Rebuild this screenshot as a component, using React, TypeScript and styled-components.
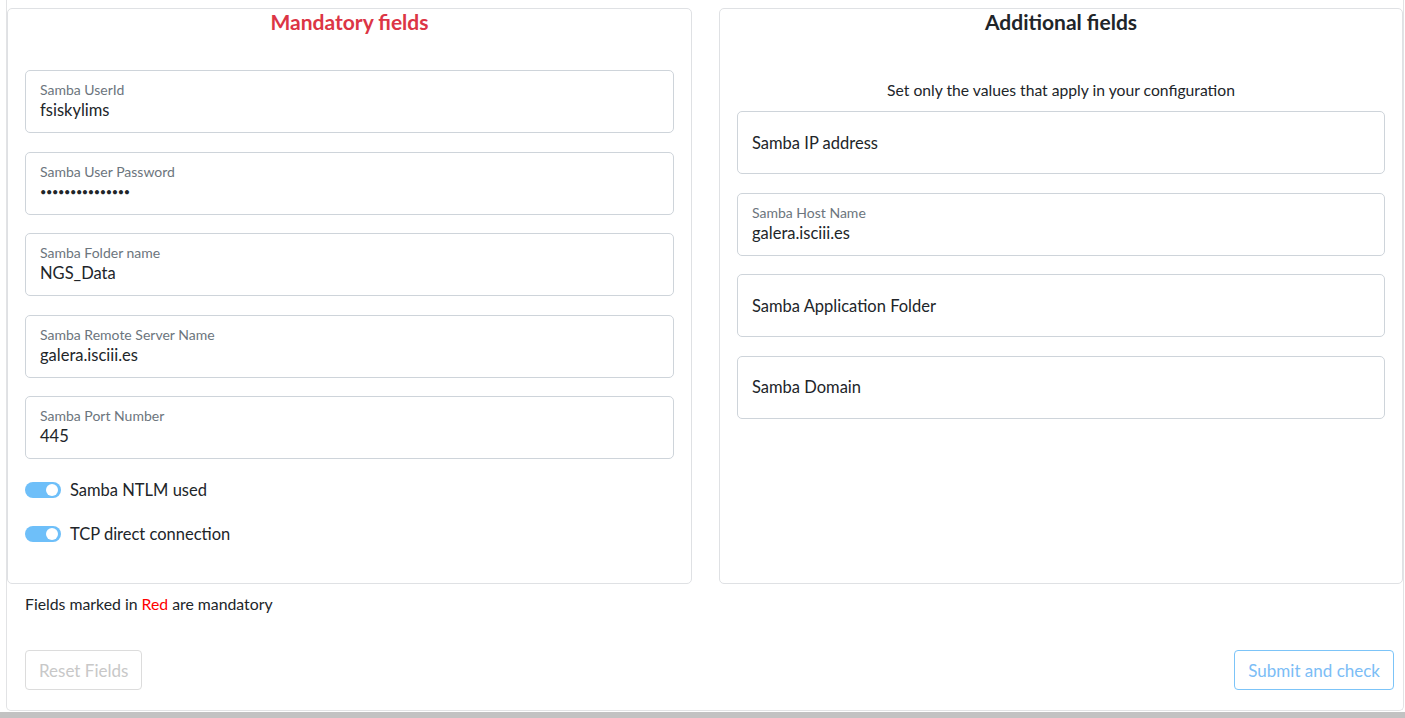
import React from 'react';
import styled, { createGlobalStyle } from 'styled-components';

const GlobalStyle = createGlobalStyle`
  html, body {
    margin: 0;
    padding: 0;
    background: #ffffff;
    font-family: Lato, "Noto Sans", sans-serif;
    color: #212529;
    overflow: hidden;
  }
  * { box-sizing: border-box; }
`;

const Page = styled.div({
  display: 'flex',
  flexDirection: 'column',
  height: 718,
});

const OuterCard = styled.div({
  border: '1px solid #e2e3e5',
  borderTop: 'none',
  borderRadius: '0 0 5px 5px',
  height: 711,
  marginLeft: 6,
  padding: '8px 9px 18px 0',
  width: 1398,
  display: 'flex',
  flexDirection: 'column',
});

const Columns = styled.div({
  display: 'grid',
  gridTemplateColumns: '685px 1fr',
  columnGap: 27,
  marginRight: -9,
});

const Panel = styled.div({
  border: '1px solid #dfe1e4',
  borderRadius: 5,
  height: 576,
  padding: '0 17px',
});

const PanelTitle = styled.h2<{ $red?: boolean }>`
  margin: 0;
  text-align: center;
  font-size: 21px;
  line-height: 26px;
  font-weight: 700;
  color: ${(p) => (p.$red ? '#dc3545' : '#212529')};
`;

const FieldList = styled.div<{ $top: number }>`
  display: flex;
  flex-direction: column;
  gap: 18.5px;
  margin-top: ${(p) => p.$top}px;
`;

const Field = styled.div({
  border: '1px solid #ced4da',
  borderRadius: 5,
  height: 63,
  padding: '0 14px',
  display: 'flex',
  flexDirection: 'column',
  justifyContent: 'center',
});

const FieldLabel = styled.div({
  color: '#6c757d',
  fontSize: 14,
  lineHeight: '16px',
});

const FieldValue = styled.div<{ $dots?: boolean }>`
  font-size: ${(p) => (p.$dots ? '11px' : '16.5px')};
  line-height: 22px;
  margin-top: 1px;
  color: #212529;
  letter-spacing: ${(p) => (p.$dots ? '-0.4px' : 'normal')};
`;

const Placeholder = styled.div({
  fontSize: 16.5,
  lineHeight: '22px',
  color: '#212529',
});

const Subtitle = styled.p({
  margin: '45px 0 0',
  textAlign: 'center',
  fontSize: 15.7,
  lineHeight: '20px',
});

const SwitchList = styled.div({
  display: 'flex',
  flexDirection: 'column',
  gap: 20,
  marginTop: 19,
});

const SwitchRow = styled.label({
  display: 'flex',
  alignItems: 'center',
  gap: 9,
  fontSize: 16.5,
  lineHeight: '24px',
});

const SwitchTrack = styled.span({
  position: 'relative',
  width: 36,
  height: 16,
  borderRadius: 8,
  background: '#6ebff9',
  display: 'inline-block',
  '&::after': {
    content: '""',
    position: 'absolute',
    right: 3,
    top: 2,
    width: 12,
    height: 12,
    borderRadius: '50%',
    background: '#ffffff',
  },
});

const Note = styled.p({
  margin: '10px 0 0 18px',
  fontSize: 15.8,
  lineHeight: '20px',
  '& span': {
    color: '#ff0000',
  },
});

const Actions = styled.div({
  display: 'flex',
  justifyContent: 'space-between',
  marginTop: 36,
  paddingLeft: 18,
});

const Button = styled.button<{ $primary?: boolean }>`
  height: 40px;
  padding: 0 13px;
  border-radius: 4px;
  background: #ffffff;
  font-family: Lato, "Noto Sans", sans-serif;
  font-size: 17px;
  border: 1px solid ${(p) => (p.$primary ? '#7cc4f8' : '#dcdcdc')};
  color: ${(p) => (p.$primary ? '#7bbdf6' : '#c8c8c8')};
`;

const BottomBar = styled.div({
  marginTop: 1,
  height: 6,
  background: '#c2c2c2',
});

type FieldData = { label: string; value?: string; dots?: boolean };

const mandatory: FieldData[] = [
  { label: 'Samba UserId', value: 'fsiskylims' },
  { label: 'Samba User Password', value: '•••••••••••••••', dots: true },
  { label: 'Samba Folder name', value: 'NGS_Data' },
  { label: 'Samba Remote Server Name', value: 'galera.isciii.es' },
  { label: 'Samba Port Number', value: '445' },
];

const additional: FieldData[] = [
  { label: 'Samba IP address' },
  { label: 'Samba Host Name', value: 'galera.isciii.es' },
  { label: 'Samba Application Folder' },
  { label: 'Samba Domain' },
];

const FloatingField = ({ label, value, dots }: FieldData) => (
  <Field>
    {value ? (
      <>
        <FieldLabel>{label}</FieldLabel>
        <FieldValue $dots={dots}>{value}</FieldValue>
      </>
    ) : (
      <Placeholder>{label}</Placeholder>
    )}
  </Field>
);

const App = () => (
  <Page>
    <GlobalStyle />
    <OuterCard>
      <Columns>
        <Panel>
          <PanelTitle $red>Mandatory fields</PanelTitle>
          <FieldList $top={35}>
            {mandatory.map((f) => (
              <FloatingField key={f.label} {...f} />
            ))}
          </FieldList>
          <SwitchList>
            <SwitchRow>
              <SwitchTrack />
              Samba NTLM used
            </SwitchRow>
            <SwitchRow>
              <SwitchTrack />
              TCP direct connection
            </SwitchRow>
          </SwitchList>
        </Panel>
        <Panel>
          <PanelTitle>Additional fields</PanelTitle>
          <Subtitle>Set only the values that apply in your configuration</Subtitle>
          <FieldList $top={11}>
            {additional.map((f) => (
              <FloatingField key={f.label} {...f} />
            ))}
          </FieldList>
        </Panel>
      </Columns>
      <Note>
        Fields marked in <span>Red</span> are mandatory
      </Note>
      <Actions>
        <Button disabled>Reset Fields</Button>
        <Button $primary>Submit and check</Button>
      </Actions>
    </OuterCard>
    <BottomBar />
  </Page>
);

export default App;
